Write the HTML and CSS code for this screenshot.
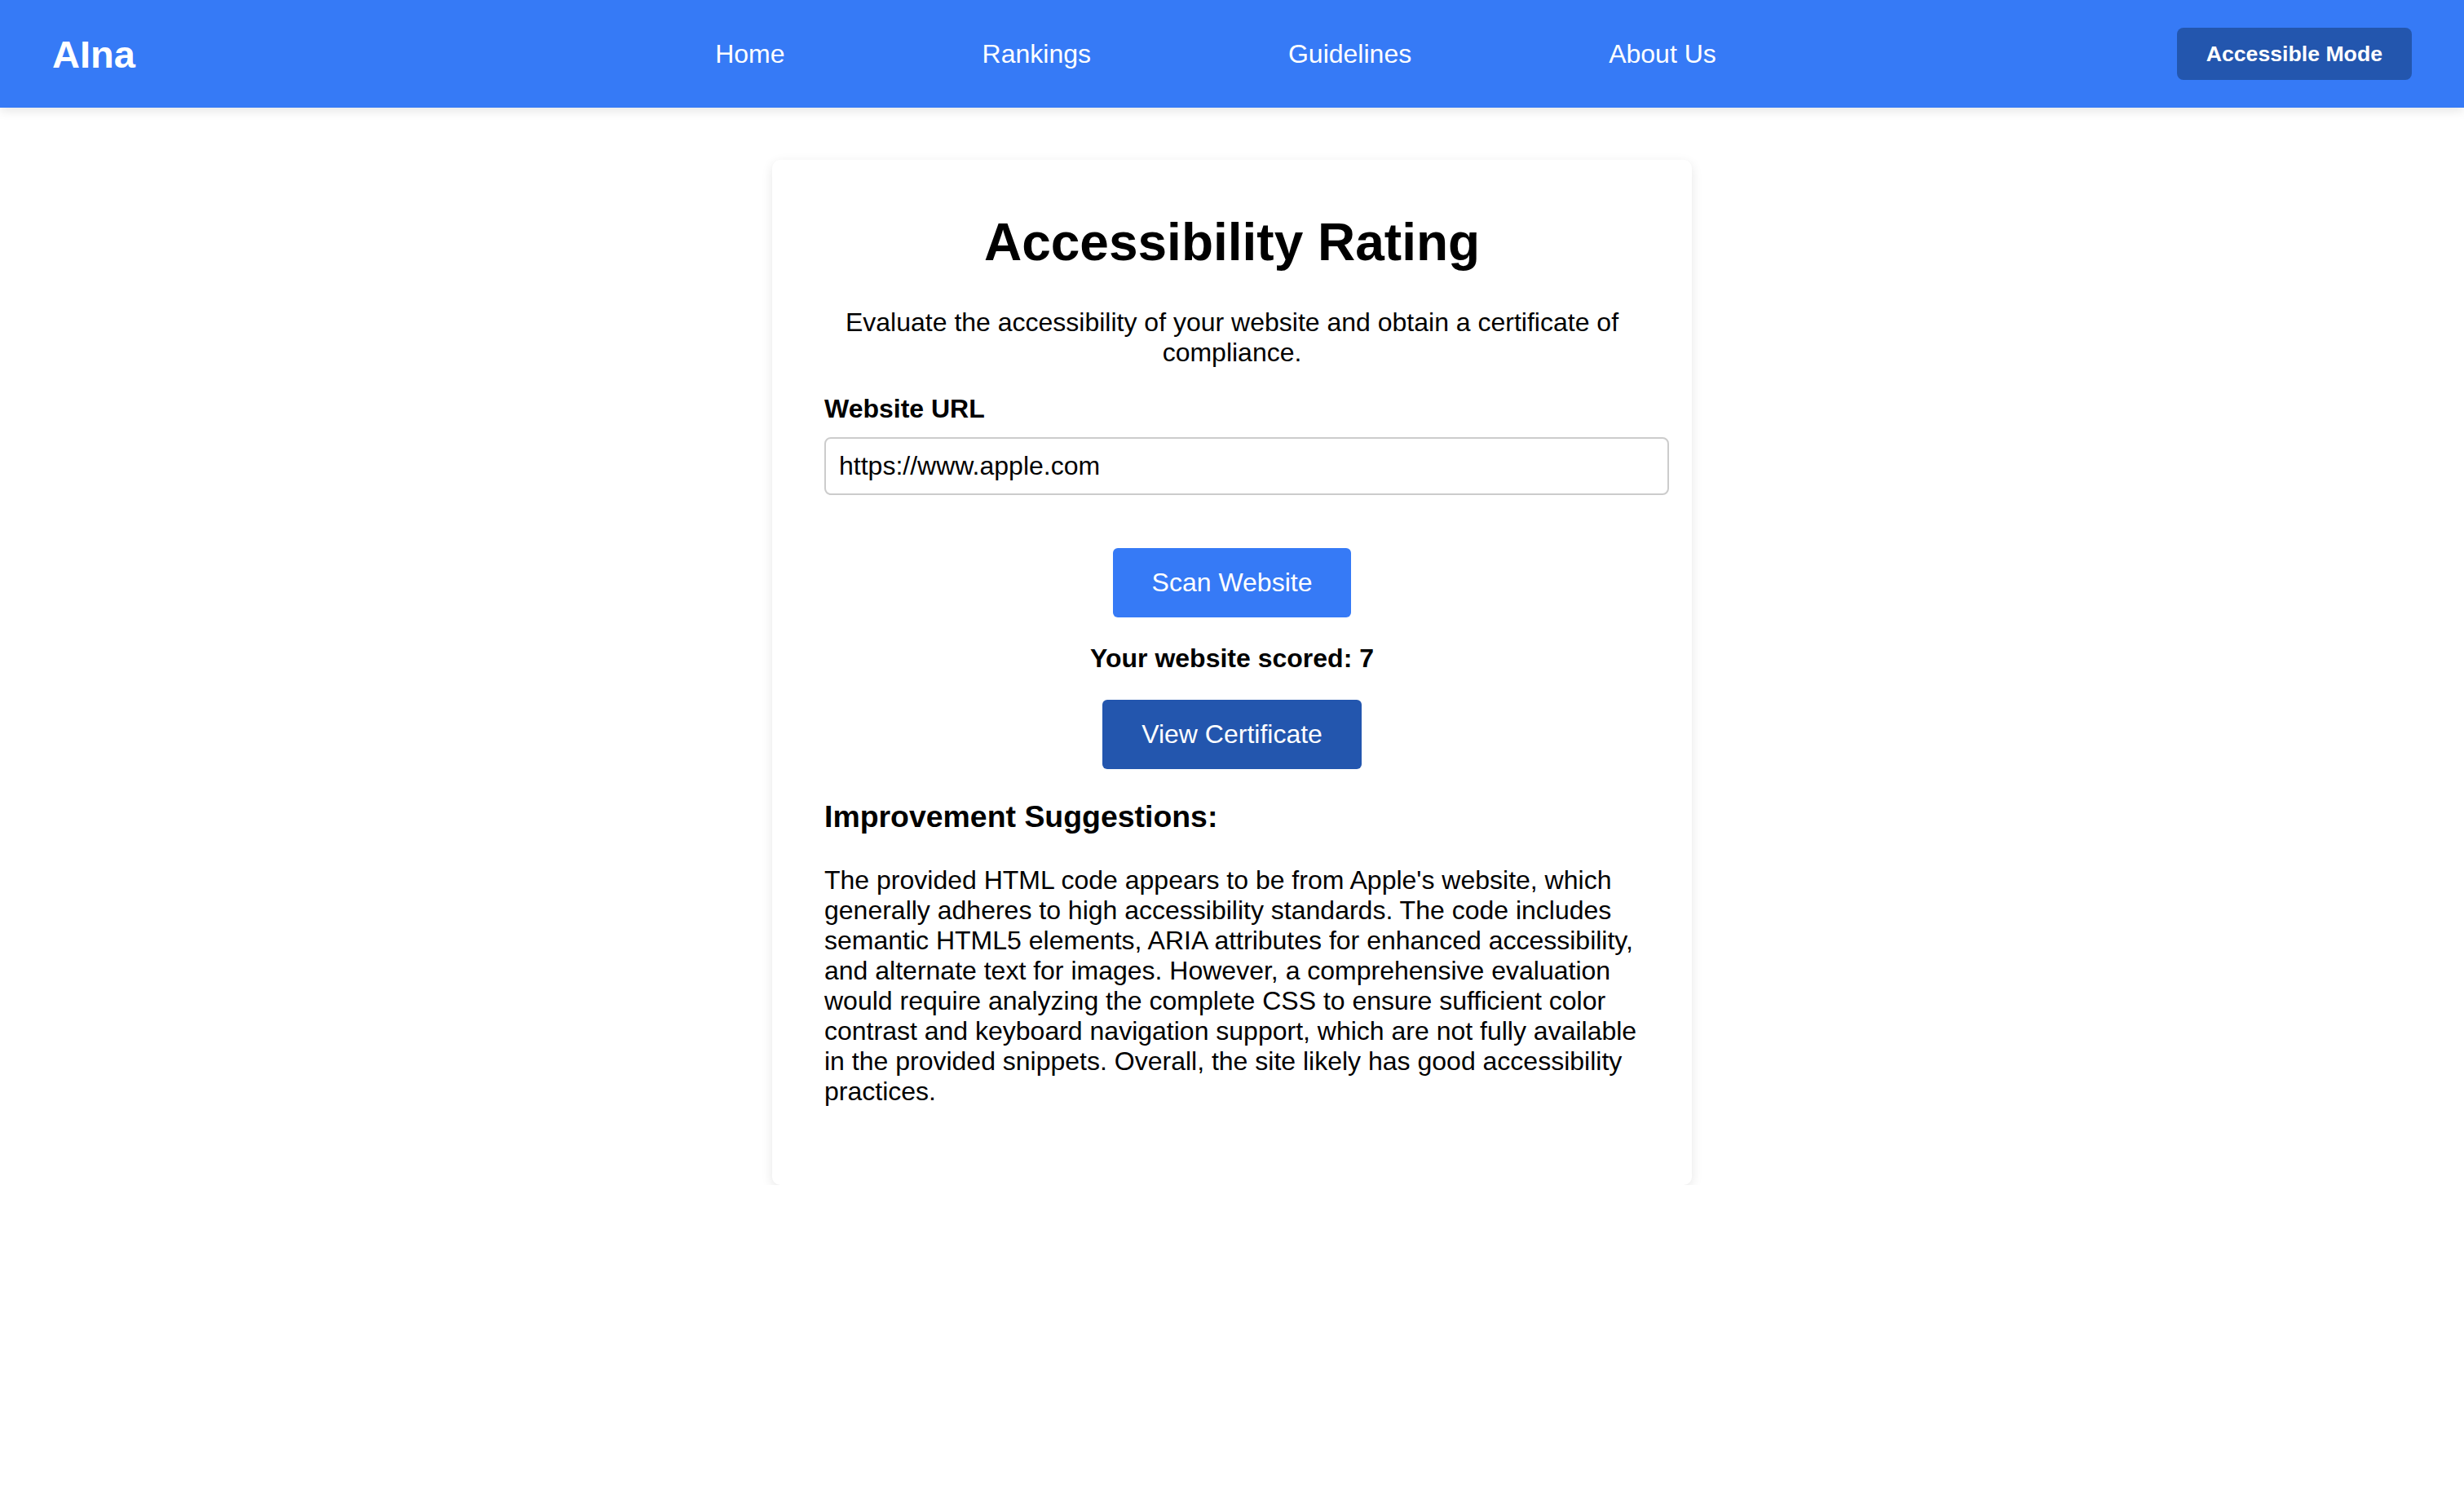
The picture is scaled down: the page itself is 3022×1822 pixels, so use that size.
FILE: index.html
```html
<!DOCTYPE html>
<html lang="en">
<head>
<meta charset="utf-8">
<title>AIna – Accessibility Rating</title>
<link rel="stylesheet" href="styles.css">
</head>
<body>
<header class="header">
  <div class="logo">AIna</div>
  <nav class="nav">
    <a class="nav-link" href="#">Home</a>
    <a class="nav-link" href="#">Rankings</a>
    <a class="nav-link" href="#">Guidelines</a>
    <a class="nav-link" href="#">About Us</a>
  </nav>
  <button class="access-btn" type="button">Accessible Mode</button>
</header>
<main class="main">
  <section class="card">
    <h1 class="title">Accessibility Rating</h1>
    <p class="intro">Evaluate the accessibility of your website and obtain a certificate of compliance.</p>
    <label class="field-label" for="url">Website URL</label>
    <input class="url-input" id="url" type="text" value="https://www.apple.com">
    <div class="scan-row">
      <button class="btn btn-primary" type="button">Scan Website</button>
    </div>
    <p class="score">Your website scored: 7</p>
    <div class="cert-row">
      <button class="btn btn-dark" type="button">View Certificate</button>
    </div>
    <h3 class="section-title">Improvement Suggestions:</h3>
    <p class="suggestion">The provided HTML code appears to be from Apple's website, which generally adheres to high accessibility standards. The code includes semantic HTML5 elements, ARIA attributes for enhanced accessibility, and alternate text for images. However, a comprehensive evaluation would require analyzing the complete CSS to ensure sufficient color contrast and keyboard navigation support, which are not fully available in the provided snippets. Overall, the site likely has good accessibility practices.</p>
  </section>
</main>
</body>
</html>
```
FILE: styles.css
```css
html, body {
  margin: 0;
  padding: 0;
  background: #ffffff;
}

body {
  font-family: "Liberation Sans", Arial, Helvetica, sans-serif;
  font-size: 32px;
  color: #000000;
}

.header {
  display: grid;
  grid-template-columns: 1fr auto 1fr;
  align-items: center;
  height: 132px;
  padding: 0 64px;
  background: #367af6;
  box-shadow: 0 4px 12px rgba(0, 0, 0, 0.1);
  position: relative;
}

.logo {
  font-size: 47px;
  font-weight: bold;
  color: #ffffff;
  justify-self: start;
}

.nav {
  display: flex;
  gap: 242px;
  padding-right: 40px;
}

.nav-link {
  color: #ffffff;
  text-decoration: none;
  font-size: 32px;
}

.access-btn {
  justify-self: end;
  background: #2356ae;
  color: #ffffff;
  font-family: inherit;
  font-weight: bold;
  font-size: 26.67px;
  line-height: 32px;
  padding: 16px 36px;
  border: none;
  border-radius: 8px;
}

.main {
  padding: 64px 0 0;
}

.card {
  width: 1000px;
  margin: 0 auto;
  padding: 64px;
  background: #ffffff;
  border-radius: 10px;
  box-shadow: 0 4px 14px rgba(0, 0, 0, 0.1);
}

.title {
  font-size: 64px;
  font-weight: bold;
  text-align: center;
  margin: 0 0 43px;
}

.intro {
  text-align: center;
  margin: 43px 0 32px;
}

.field-label {
  display: block;
  font-weight: bold;
  margin-bottom: 16px;
}

.url-input {
  display: block;
  width: 100%;
  height: 35px;
  padding: 16px;
  margin: 0;
  border: 2px solid #cccccc;
  border-radius: 8px;
  font-family: inherit;
  font-size: 32px;
  color: #000000;
  background: #ffffff;
}

.scan-row,
.cert-row {
  text-align: center;
}

.scan-row {
  margin-top: 65px;
}

.btn {
  font-family: inherit;
  font-size: 32px;
  line-height: 37px;
  padding: 24px 48px;
  border: none;
  border-radius: 6px;
  color: #ffffff;
}

.btn-primary {
  background: #367af6;
}

.btn-dark {
  background: #2356ae;
}

.score {
  font-weight: bold;
  text-align: center;
  margin: 32px 0;
}

.section-title {
  font-size: 37.44px;
  font-weight: bold;
  margin: 37.44px 0;
}

.suggestion {
  margin: 37.44px 0 32px;
}
```
